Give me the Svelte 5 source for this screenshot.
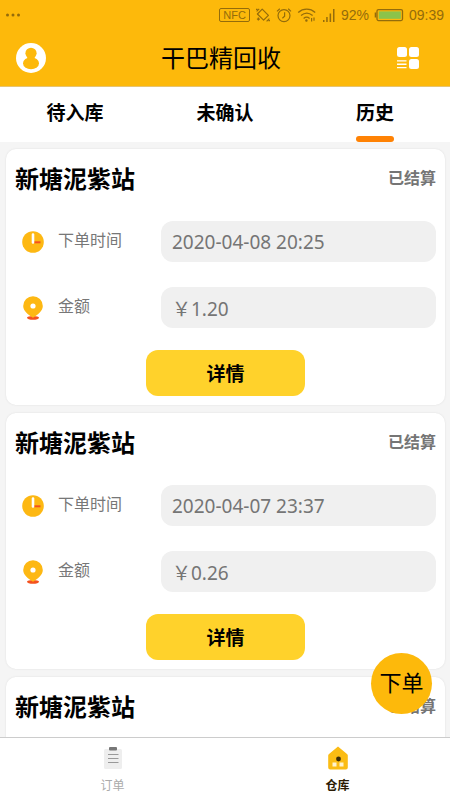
<script lang="ts">
	interface Order {
		id: number;
		station: string;
		status: string;
		time: string;
		amount: string;
	}

	// full-width yuan sign
	const YUAN = '\uffe5';

	const tabs = ['待入库', '未确认', '历史'];
	let activeTab = $state(2);
	let page = $state('store');

	const orders: Order[] = [
		{ id: 1, station: '新塘泥紫站', status: '已结算', time: '2020-04-08 20:25', amount: '1.20' },
		{ id: 2, station: '新塘泥紫站', status: '已结算', time: '2020-04-07 23:37', amount: '0.26' },
		{ id: 3, station: '新塘泥紫站', status: '已结算', time: '2020-04-07 22:10', amount: '0.50' }
	];
</script>

<div class="app">
	<header>
		<div class="status">
			<svg class="dots" width="16" height="4" viewBox="0 0 16 4" fill="currentColor">
				<circle cx="2.5" cy="2" r="1.5" /><circle cx="8" cy="2" r="1.5" /><circle cx="13.5" cy="2" r="1.5" />
			</svg>
			<span class="nfc">NFC</span>
			<svg width="16" height="16" viewBox="0 0 16 16" fill="none" stroke="currentColor" stroke-width="1.2">
				<path d="M7.2 2.2 13.4 8.4 8.6 13.2 2.4 7z" stroke-linejoin="round" />
				<path d="M1.6 4.4 4.2 1.8M1 2.4h1.5M11.6 14.4 14.4 11.6M13.5 13.6H15M3.4 10.6v3M1.9 12.1h3" />
			</svg>
			<svg width="16" height="16" viewBox="0 0 16 16" fill="none" stroke="currentColor" stroke-width="1.2">
				<circle cx="8" cy="8.6" r="6" />
				<path d="M8.6 5.2v4L6.4 11.2M1 4.4 3.8 1.8M12.2 1.8l2.8 2.6" />
			</svg>
			<svg width="20" height="16" viewBox="0 0 20 16" fill="none" stroke="currentColor" stroke-width="1.3">
				<path d="M1.2 5.4c5-4.4 12-4.4 17 0M4 8.6c3.6-3 8-3 11.6 0M6.6 11.4c2-1.6 4-1.6 6 0" />
				<circle cx="9.4" cy="13.6" r="0.6" fill="currentColor" />
				<path d="M14.6 11v3.4M17 10.4v3.4" stroke-width="1.2" />
			</svg>
			<svg width="14" height="16" viewBox="0 0 14 16" fill="currentColor">
				<path d="M1 13h1.5v2H1zM4.2 10h1.5v5H4.2zM7.6 6.5h1.5V15H7.6zM11 2h1.5v13H11z" />
			</svg>
			<span>92%</span>
			<svg width="30" height="14" viewBox="0 0 30 14" fill="none" stroke="currentColor">
				<rect x="3" y="1.6" width="25.5" height="11" rx="1.5" stroke-width="1.3" />
				<path d="M1.5 4.5v5" stroke-width="1.6" />
				<rect x="4.8" y="3.4" width="22" height="7.4" fill="#8bc34a" stroke="none" />
			</svg>
			<span>09:39</span>
		</div>
		<div class="bar">
			<button aria-label="我的">
				<svg width="30" height="30" viewBox="0 0 30 30">
					<circle cx="15" cy="15" r="15" fill="#fff" />
					<circle cx="15" cy="10.3" r="5.6" fill="#fdb90b" />
					<ellipse cx="15" cy="20.2" rx="8" ry="6" fill="#fdb90b" />
				</svg>
			</button>
			<h1>干巴精回收</h1>
			<button aria-label="菜单">
				<svg width="24" height="24" viewBox="0 0 24 24" fill="#fff">
					<rect x="1" y="1" width="10" height="10" rx="2.5" />
					<rect x="13" y="1" width="10" height="10" rx="2.5" />
					<rect x="13" y="13" width="10" height="10" rx="2.5" />
					<path d="M1 14.2h9.5v1.3H1zM1 17.6h9.5v1.3H1zM1 21h9.5v1.3H1z" />
				</svg>
			</button>
		</div>
	</header>

	<div class="tabs" role="tablist">
		{#each tabs as tab, i}
			<button role="tab" aria-selected={activeTab === i} class:active={activeTab === i} onclick={() => (activeTab = i)}>
				<span>{tab}</span>
			</button>
		{/each}
	</div>

	<main>
		{#each orders as order (order.id)}
			<article>
				<div class="head">
					<h2>{order.station}</h2>
					<span>{order.status}</span>
				</div>
				<div class="row">
					<svg width="22" height="24" viewBox="0 0 22 24">
						<circle cx="11" cy="12" r="10.8" fill="#fdb813" />
						<path d="M11 4.5v8" stroke="#fff" stroke-width="2.6" stroke-linecap="round" />
						<path d="M12.5 12.3h6" stroke="#f4511e" stroke-width="2" />
					</svg>
					<label for="time-{order.id}">下单时间</label>
					<input id="time-{order.id}" value={order.time} readonly />
				</div>
				<div class="row">
					<svg width="22" height="24" viewBox="0 0 22 24">
						<ellipse cx="11" cy="21.8" rx="6" ry="1.9" fill="#f4511e" />
						<path d="M11 .2a9.8 9.8 0 0 1 9.8 9.8c0 5-4.8 8.5-9.8 11.7C6 18.5 1.2 15 1.2 10A9.8 9.8 0 0 1 11 .2z" fill="#fdb813" />
						<circle cx="11" cy="10" r="2.6" fill="#fff" />
					</svg>
					<label for="amount-{order.id}">金额</label>
					<input id="amount-{order.id}" value="{YUAN}{order.amount}" readonly />
				</div>
				<button class="detail">详情</button>
			</article>
		{/each}
	</main>

	<nav>
		<button class="order">下单</button>
		<a href="#orders" class:current={page === 'orders'} onclick={() => (page = 'orders')}>
			<svg width="24" height="26" viewBox="0 0 24 26">
				<rect x="3" y="3" width="18" height="20" rx="1.5" fill="#eee" />
				<rect x="8" y="1" width="8" height="3.5" rx="1" fill="#777" />
				<path d="M7 8.5h10.5M7 12.5h10.5M7 16.5h10.5" stroke="#999" stroke-width="1.2" />
			</svg>
			<span>订单</span>
		</a>
		<a href="#store" class:current={page === 'store'} onclick={() => (page = 'store')}>
			<svg width="24" height="26" viewBox="0 0 24 26">
				<path d="M12 .6 21 8a2 2 0 0 1 .8 1.6v11.9a2 2 0 0 1-2 2H4.2a2 2 0 0 1-2-2V9.6A2 2 0 0 1 3 8z" fill="#fbbc14" />
				<circle cx="12.5" cy="13" r="2.4" fill="#3b2c0a" />
				<rect x="6.5" y="16.5" width="4" height="4" fill="#fff3cf" />
				<rect x="13.5" y="16.5" width="4" height="4" fill="#fff3cf" />
			</svg>
			<span>仓库</span>
		</a>
	</nav>
</div>

<style>
	:global(body) {
		margin: 0;
	}
	.app {
		display: flex;
		flex-direction: column;
		height: 100vh;
		background: #f5f5f5;
		color: #000;
		font-family: 'Noto Sans', 'Noto Sans CJK SC', sans-serif;
	}
	button {
		border: 0;
		padding: 0;
		background: none;
		font-family: inherit;
		color: inherit;
		cursor: pointer;
	}
	svg {
		display: block;
		flex-shrink: 0;
	}
	header {
		background: #fdb90b;
		border-bottom: 1px solid #e6c473;
	}
	.status {
		display: flex;
		align-items: center;
		height: 30px;
		padding: 0 6px 0 5px;
		gap: 5px;
		color: #946c0b;
		font-family: 'Liberation Sans', Arial, sans-serif;
		font-size: 14px;
	}
	.dots {
		margin-right: auto;
	}
	.nfc {
		border: 1px solid currentColor;
		border-radius: 2px;
		padding: 0 3px;
		font-size: 11px;
		line-height: 12px;
	}
	.bar {
		display: flex;
		align-items: center;
		justify-content: space-between;
		height: 56px;
		padding: 0 30px 0 16px;
	}
	h1 {
		margin: 0;
		font-size: 24px;
		font-weight: 400;
		line-height: 32px;
	}
	.tabs {
		display: flex;
		height: 55px;
		flex-shrink: 0;
		background: #fff;
	}
	.tabs button {
		flex: 1;
		display: flex;
		justify-content: center;
		font-size: 19px;
		font-weight: 700;
	}
	.tabs span {
		display: flex;
		flex-direction: column;
		padding-top: 4px;
		line-height: 45px;
	}
	.tabs .active span::after {
		content: '';
		height: 6px;
		border-radius: 3px;
		background: #ff8204;
	}
	main {
		flex: 1;
		min-height: 0;
		overflow-y: auto;
		scrollbar-width: none;
		padding: 7px 5px 0 6px;
	}
	article {
		margin-bottom: 8px;
		padding: 0 9px 9px;
		border-radius: 10px;
		background: #fff;
		box-shadow: 0 0 2px #ddd;
	}
	.head {
		display: flex;
		align-items: center;
		justify-content: space-between;
		height: 56px;
		margin-bottom: 16px;
	}
	h2 {
		margin: 0;
		font-size: 24px;
		font-weight: 700;
	}
	.head span {
		font-size: 16px;
		font-weight: 700;
		color: #757575;
	}
	.row {
		display: flex;
		align-items: center;
		margin-bottom: 25px;
		padding-left: 7px;
	}
	.row label {
		width: 103px;
		margin-left: 14px;
		font-size: 16px;
		line-height: 24px;
		padding-bottom: 3px;
		color: #777;
	}
	.row input {
		flex: 1;
		min-width: 0;
		box-sizing: border-box;
		height: 41px;
		border: 0;
		border-radius: 12px;
		padding: 0 11px;
		background: #f0f0f0;
		color: #757575;
		font-family: inherit;
		font-size: 19px;
		outline: none;
	}
	.detail {
		display: block;
		width: 38%;
		height: 46px;
		margin: -3px auto 0;
		border-radius: 12px;
		background: #ffd22b;
		font-size: 19px;
		font-weight: 700;
	}
	nav {
		position: relative;
		display: flex;
		height: 62px;
		flex-shrink: 0;
		border-top: 1px solid #ccc;
		background: #fff;
	}
	nav a {
		flex: 1;
		display: flex;
		flex-direction: column;
		align-items: center;
		gap: 6px;
		padding-top: 8px;
		color: #aaa;
		font-size: 12px;
		line-height: 16px;
		text-decoration: none;
	}
	nav .current {
		color: #2b1c04;
		font-weight: 700;
	}
	.order {
		position: absolute;
		right: 18px;
		bottom: 86px;
		width: 61px;
		height: 61px;
		padding-bottom: 6px;
		border-radius: 50%;
		background: #fdb90b;
		font-size: 22px;
	}
</style>
